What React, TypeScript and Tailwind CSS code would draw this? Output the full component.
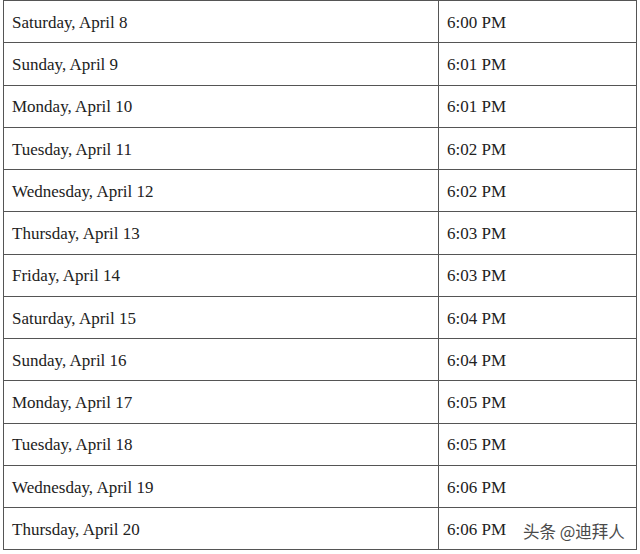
const rows: [string, string][] = [
  ["Saturday, April 8", "6:00 PM"],
  ["Sunday, April 9", "6:01 PM"],
  ["Monday, April 10", "6:01 PM"],
  ["Tuesday, April 11", "6:02 PM"],
  ["Wednesday, April 12", "6:02 PM"],
  ["Thursday, April 13", "6:03 PM"],
  ["Friday, April 14", "6:03 PM"],
  ["Saturday, April 15", "6:04 PM"],
  ["Sunday, April 16", "6:04 PM"],
  ["Monday, April 17", "6:05 PM"],
  ["Tuesday, April 18", "6:05 PM"],
  ["Wednesday, April 19", "6:06 PM"],
  ["Thursday, April 20", "6:06 PM"],
];

export default function App() {
  return (
    <div className="relative h-[554px] w-[640px] bg-white font-['Liberation_Serif',serif] text-[17px] text-[#222]">
      <div className="ml-[3px] w-[634px] border-x border-t border-[#555]">
        {rows.map(([day, time]) => (
          <div key={day} className="flex h-[42.25px] border-b border-[#555]">
            <div className="flex w-[435px] items-center border-r border-[#555] pl-2 pt-[2px]">{day}</div>
            <div className="flex flex-1 items-center pl-2 pt-[2px]">{time}</div>
          </div>
        ))}
      </div>
      <span className="absolute left-[523px] top-[519px] font-['Noto_Sans_CJK_SC',sans-serif] text-[16.5px] text-[#4a4a4a] [text-shadow:0_0_2px_#fff]">
        头条 @迪拜人
      </span>
    </div>
  );
}
